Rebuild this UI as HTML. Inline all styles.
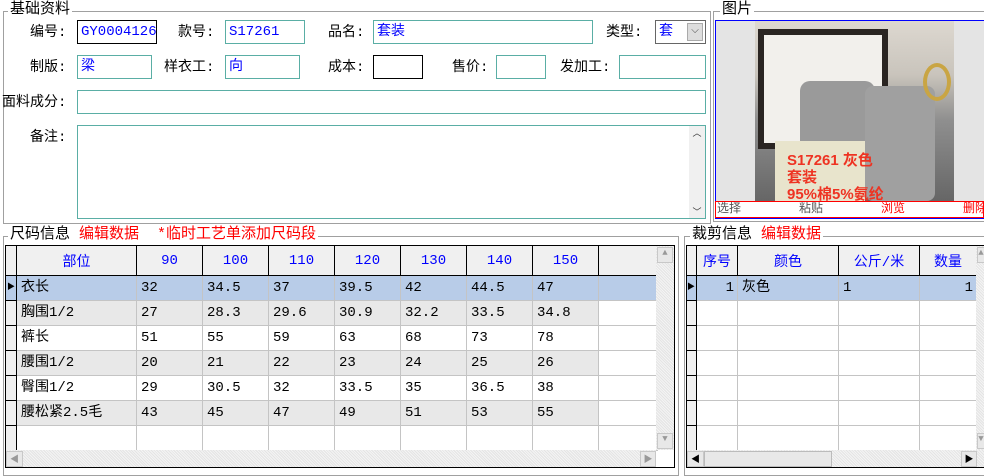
<!DOCTYPE html>
<html><head><meta charset="utf-8"><style>
*{box-sizing:border-box;margin:0;padding:0}
body{width:984px;height:470px;background:#fff;position:relative;overflow:hidden;font-family:"Liberation Mono","Noto Sans CJK SC","WenQuanYi Zen Hei",monospace;font-size:14px;color:#000}
.a{position:absolute}
.grp{position:absolute;border:1px solid #a0a0a0}
.gt{position:absolute;background:#fff;padding:0 2px;font-size:15px;line-height:16px;white-space:nowrap}
.lb{position:absolute;line-height:24px;white-space:nowrap;text-align:right}
.bx{position:absolute;border:1px solid #5aaea5;height:24px;color:#00f;line-height:22px;padding-left:3px;white-space:nowrap}
.bk{border-color:#000}
.red{color:#f00}
table{border-collapse:collapse;table-layout:fixed;position:absolute}
td{border:1px solid #c4c4c4;height:25px;padding-left:4px;white-space:nowrap;overflow:hidden;line-height:24px}
th{border:1px solid #000;background:#f0f0f0;color:#00f;font-weight:normal;height:30px}
.rh{background:#f0f0f0;border:1px solid #000;border-top:1px solid #000;padding:0}
.g{background:#e8e8e8}
.sel td{background:#b8cce8}
.sb{position:absolute;background:#f0f0f0;background-image:repeating-linear-gradient(45deg,#e4e4e4 0 1px,#f4f4f4 1px 2px)}
.btn{position:absolute;background:#e8e8e8;border:1px solid #c8c8c8;color:#999;font-size:9px;text-align:center}
</style></head><body>

<div class="grp" style="left:3px;top:11px;width:708px;height:213px"></div>
<div class="gt" style="left:8px;top:2px">基础资料</div>
<div class="lb" style="left:30px;top:21px">编号:</div><div class="bx bk" style="left:77px;top:20px;width:80px">GY0004126</div>
<div class="lb" style="left:178px;top:21px">款号:</div><div class="bx" style="left:225px;top:20px;width:80px">S17261</div>
<div class="lb" style="left:328px;top:21px">品名:</div><div class="bx" style="left:373px;top:20px;width:220px">套装</div>
<div class="lb" style="left:606px;top:21px">类型:</div>
<div class="bx" style="left:655px;top:20px;width:51px;border-color:#666">套</div>
<div class="a" style="left:687px;top:23px;width:16px;height:18px;background:#ddd;border:1px solid #aaa;font-size:10px;text-align:center;line-height:16px;color:#444">⌵</div>
<div class="lb" style="left:30px;top:56px">制版:</div><div class="bx" style="left:77px;top:55px;width:75px">梁</div>
<div class="lb" style="left:164px;top:56px">样衣工:</div><div class="bx" style="left:225px;top:55px;width:75px">向</div>
<div class="lb" style="left:328px;top:56px">成本:</div><div class="bx bk" style="left:373px;top:55px;width:50px"></div>
<div class="lb" style="left:452px;top:56px">售价:</div><div class="bx" style="left:496px;top:55px;width:50px"></div>
<div class="lb" style="left:560px;top:56px">发加工:</div><div class="bx" style="left:619px;top:55px;width:87px"></div>
<div class="lb" style="left:2px;top:91px">面料成分:</div><div class="bx" style="left:77px;top:90px;width:629px"></div>
<div class="lb" style="left:30px;top:126px">备注:</div><div class="bx" style="left:77px;top:125px;width:629px;height:94px"></div>
<div class="a" style="left:689px;top:126px;width:16px;height:92px;background:#f0f0f0;font-size:9px;color:#333;text-align:center">︿<div style="position:absolute;bottom:0;width:16px">﹀</div></div>

<div class="grp" style="left:713px;top:11px;width:280px;height:211px"></div>
<div class="gt" style="left:720px;top:2px">图片</div>
<div class="a" style="left:715px;top:20px;width:269px;height:199px;border-top:1px solid #00f;border-left:1px solid #00f;border-bottom:1px solid #00f;background:#e4e4e4"></div>
<div class="a" style="left:755px;top:21px;width:199px;height:180px;background:linear-gradient(#ddd8d0 0,#c9c4bc 30%,#8f8f8f 55%,#666 100%);overflow:hidden">
 <div class="a" style="left:3px;top:8px;width:130px;height:120px;border:6px solid #2a2522;background:#f2f0ec"></div>
 <div class="a" style="left:45px;top:60px;width:75px;height:75px;background:#9a9a9a;border-radius:10px"></div>
 <div class="a" style="left:110px;top:65px;width:70px;height:115px;background:#a0a0a0;border-radius:8px"></div>
 <div class="a" style="left:20px;top:120px;width:90px;height:60px;background:#e8e4cc"></div>
 <div class="a" style="left:168px;top:42px;width:28px;height:38px;border:4px solid #c9a544;border-radius:50%"></div>
 <div class="a red" style="left:32px;top:131px;font-family:'Liberation Sans','Noto Sans CJK SC',sans-serif;font-size:15px;line-height:17px;color:#ee3322;font-weight:bold;white-space:nowrap">S17261 灰色<br>套装<br>95%棉5%氨纶</div>
</div>
<div class="a" style="left:715px;top:201px;width:269px;height:17px;border:1px solid #f00;background:#fff;font-size:12px;line-height:15px;overflow:hidden;white-space:nowrap">
 <span class="a" style="left:1px;color:#555">选择</span><span class="a" style="left:83px;color:#555">粘贴</span><span class="a" style="left:165px;color:#f00">浏览</span><span class="a" style="left:247px;color:#f00">删除</span>
</div>

<div class="grp" style="left:3px;top:236px;width:676px;height:240px"></div>
<div class="gt" style="left:8px;top:227px">尺码信息 <span class="red">编辑数据&nbsp;&nbsp;*临时工艺单添加尺码段</span></div>
<div class="a" style="left:5px;top:245px;width:670px;height:223px;border:1px solid #000;background:#fff"></div>
<table style="left:5px;top:245px;width:652px">
<colgroup><col style="width:11px"><col style="width:120px"><col style="width:66px"><col style="width:66px"><col style="width:66px"><col style="width:66px"><col style="width:66px"><col style="width:66px"><col style="width:66px"><col style="width:59px"></colgroup>
<tr><th class="rh"></th><th>部位</th><th>90</th><th>100</th><th>110</th><th>120</th><th>130</th><th>140</th><th>150</th><th style="border-right:none"></th></tr>
<tr class="sel"><td class="rh" style="font-size:8px;padding-left:1px">▶</td><td>衣长</td><td>32</td><td>34.5</td><td>37</td><td>39.5</td><td>42</td><td>44.5</td><td>47</td><td style="border-right:1px solid #1a6ed8"></td></tr>
<tr><td class="rh"></td><td class="g">胸围1/2</td><td class="g">27</td><td class="g">28.3</td><td class="g">29.6</td><td class="g">30.9</td><td class="g">32.2</td><td class="g">33.5</td><td class="g">34.8</td><td></td></tr>
<tr><td class="rh"></td><td>裤长</td><td>51</td><td>55</td><td>59</td><td>63</td><td>68</td><td>73</td><td>78</td><td></td></tr>
<tr><td class="rh"></td><td class="g">腰围1/2</td><td class="g">20</td><td class="g">21</td><td class="g">22</td><td class="g">23</td><td class="g">24</td><td class="g">25</td><td class="g">26</td><td></td></tr>
<tr><td class="rh"></td><td>臀围1/2</td><td>29</td><td>30.5</td><td>32</td><td>33.5</td><td>35</td><td>36.5</td><td>38</td><td></td></tr>
<tr><td class="rh"></td><td class="g">腰松紧2.5毛</td><td class="g">43</td><td class="g">45</td><td class="g">47</td><td class="g">49</td><td class="g">51</td><td class="g">53</td><td class="g">55</td><td></td></tr>
<tr><td class="rh"></td><td></td><td></td><td></td><td></td><td></td><td></td><td></td><td></td><td></td></tr>
</table>
<div class="sb" style="left:656px;top:246px;width:18px;height:204px"></div>
<div class="btn" style="left:657px;top:247px;width:16px;height:16px">▲</div>
<div class="btn" style="left:657px;top:433px;width:16px;height:16px">▼</div>
<div class="sb" style="left:6px;top:450px;width:650px;height:17px"></div>
<div class="btn" style="left:6px;top:451px;width:17px;height:16px">◀</div>
<div class="btn" style="left:640px;top:451px;width:16px;height:16px">▶</div>

<div class="grp" style="left:684px;top:236px;width:310px;height:240px"></div>
<div class="gt" style="left:690px;top:227px">裁剪信息 <span class="red">编辑数据</span></div>
<div class="a" style="left:686px;top:245px;width:300px;height:223px;border:1px solid #000;background:#fff"></div>
<table style="left:686px;top:245px;width:290px">
<colgroup><col style="width:10px"><col style="width:41px"><col style="width:101px"><col style="width:81px"><col style="width:57px"></colgroup>
<tr><th class="rh"></th><th>序号</th><th>颜色</th><th>公斤/米</th><th>数量</th></tr>
<tr class="sel"><td class="rh" style="font-size:8px;padding-left:0">▶</td><td style="text-align:right;padding-right:3px">1</td><td>灰色</td><td>1</td><td style="text-align:right;padding-right:3px;border-right:1px solid #1a6ed8">1</td></tr>
<tr><td class="rh"></td><td></td><td></td><td></td><td></td></tr>
<tr><td class="rh"></td><td></td><td></td><td></td><td></td></tr>
<tr><td class="rh"></td><td></td><td></td><td></td><td></td></tr>
<tr><td class="rh"></td><td></td><td></td><td></td><td></td></tr>
<tr><td class="rh"></td><td></td><td></td><td></td><td></td></tr>
<tr><td class="rh"></td><td></td><td></td><td></td><td></td></tr>
</table>
<div class="sb" style="left:976px;top:246px;width:10px;height:204px"></div>
<div class="btn" style="left:977px;top:247px;width:8px;height:16px">▲</div>
<div class="btn" style="left:977px;top:433px;width:8px;height:16px">▼</div>
<div class="sb" style="left:687px;top:450px;width:297px;height:17px"></div>
<div class="btn" style="left:687px;top:451px;width:17px;height:16px;color:#000">◀</div>
<div class="a" style="left:704px;top:451px;width:128px;height:16px;background:#e8e8e8;border:1px solid #bbb"></div>
<div class="btn" style="left:961px;top:451px;width:16px;height:16px;color:#000">▶</div>
</body></html>
